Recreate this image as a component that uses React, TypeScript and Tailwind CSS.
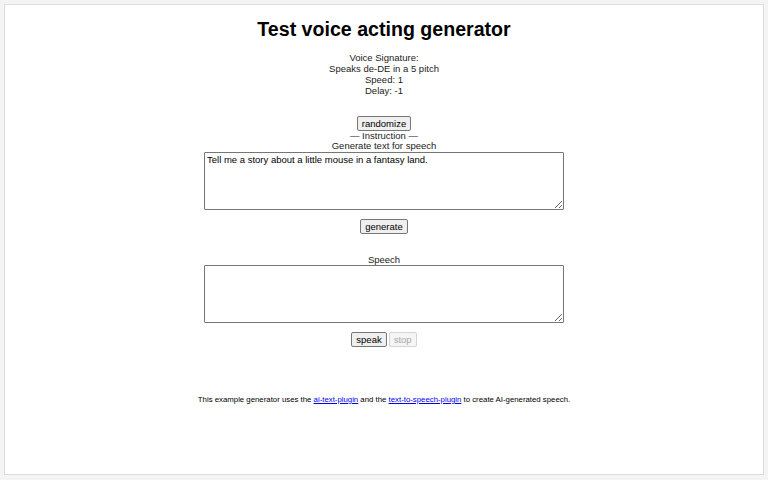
import React, { useState } from 'react';

const btn =
  'px-[4px] h-[15px] leading-[13px] text-[9.5px] bg-[#efefef] border border-[#767676] rounded-[2px]';

export default function App() {
  const [instruction, setInstruction] = useState('Tell me a story about a little mouse in a fantasy land.');
  const [speech, setSpeech] = useState('');

  return (
    <div className="w-[768px] h-[480px] bg-[#f4f4f4] p-[4px] font-['Liberation_Sans',Arial,sans-serif] text-[#222]">
      <div className="h-[471px] w-[760px] bg-white border border-[#dcdcdc] flex flex-col items-center">
        <h1 className="mt-[13px] text-[19.6px] leading-[23px] font-bold text-black">Test voice acting generator</h1>

        {/* firma de voz */}
        <div className="mt-[11px] text-[9.5px] leading-[11px] text-center">
          <div>Voice Signature:</div>
          <div>Speaks de-DE in a 5 pitch</div>
          <div>Speed: 1</div>
          <div>Delay: -1</div>
        </div>

        <button type="button" className={`${btn} mt-[20px] text-black`}>randomize</button>
        <div className="text-[9.5px] leading-[10px]">— Instruction —</div>
        <div className="text-[9.5px] leading-[10px]">Generate text for speech</div>
        <textarea
          className="mt-[1px] w-[360px] h-[58px] border border-[#767676] rounded-[1px] px-[2px] py-[1px] text-[9.5px] leading-[11px] text-black resize-y"
          value={instruction}
          onChange={(e) => setInstruction(e.target.value)}
        />

        <button type="button" className={`${btn} mt-[9px] text-black`}>generate</button>

        <div className="mt-[20px] text-[9.5px] leading-[11px]">Speech</div>
        <textarea
          className="w-[360px] h-[58px] border border-[#767676] rounded-[1px] px-[2px] py-[1px] text-[9.5px] leading-[11px] text-black resize-y"
          value={speech}
          onChange={(e) => setSpeech(e.target.value)}
        />

        <div className="mt-[9px] flex gap-[2px]">
          <button type="button" className={`${btn} text-black`}>speak</button>
          <button type="button" disabled className="px-[4px] h-[15px] leading-[13px] text-[9.5px] text-[#a8a8a8] bg-[#f5f5f5] border border-[#d4d4d4] rounded-[2px]">stop</button>
        </div>

        <p className="mt-[48px] text-[7.8px] leading-[10px] text-black">
          This example generator uses the{' '}
          <a href="#" className="text-[#0000ee] underline">ai-text-plugin</a> and the{' '}
          <a href="#" className="text-[#0000ee] underline">text-to-speech-plugin</a> to create AI-generated speech.
        </p>
      </div>
    </div>
  );
}
